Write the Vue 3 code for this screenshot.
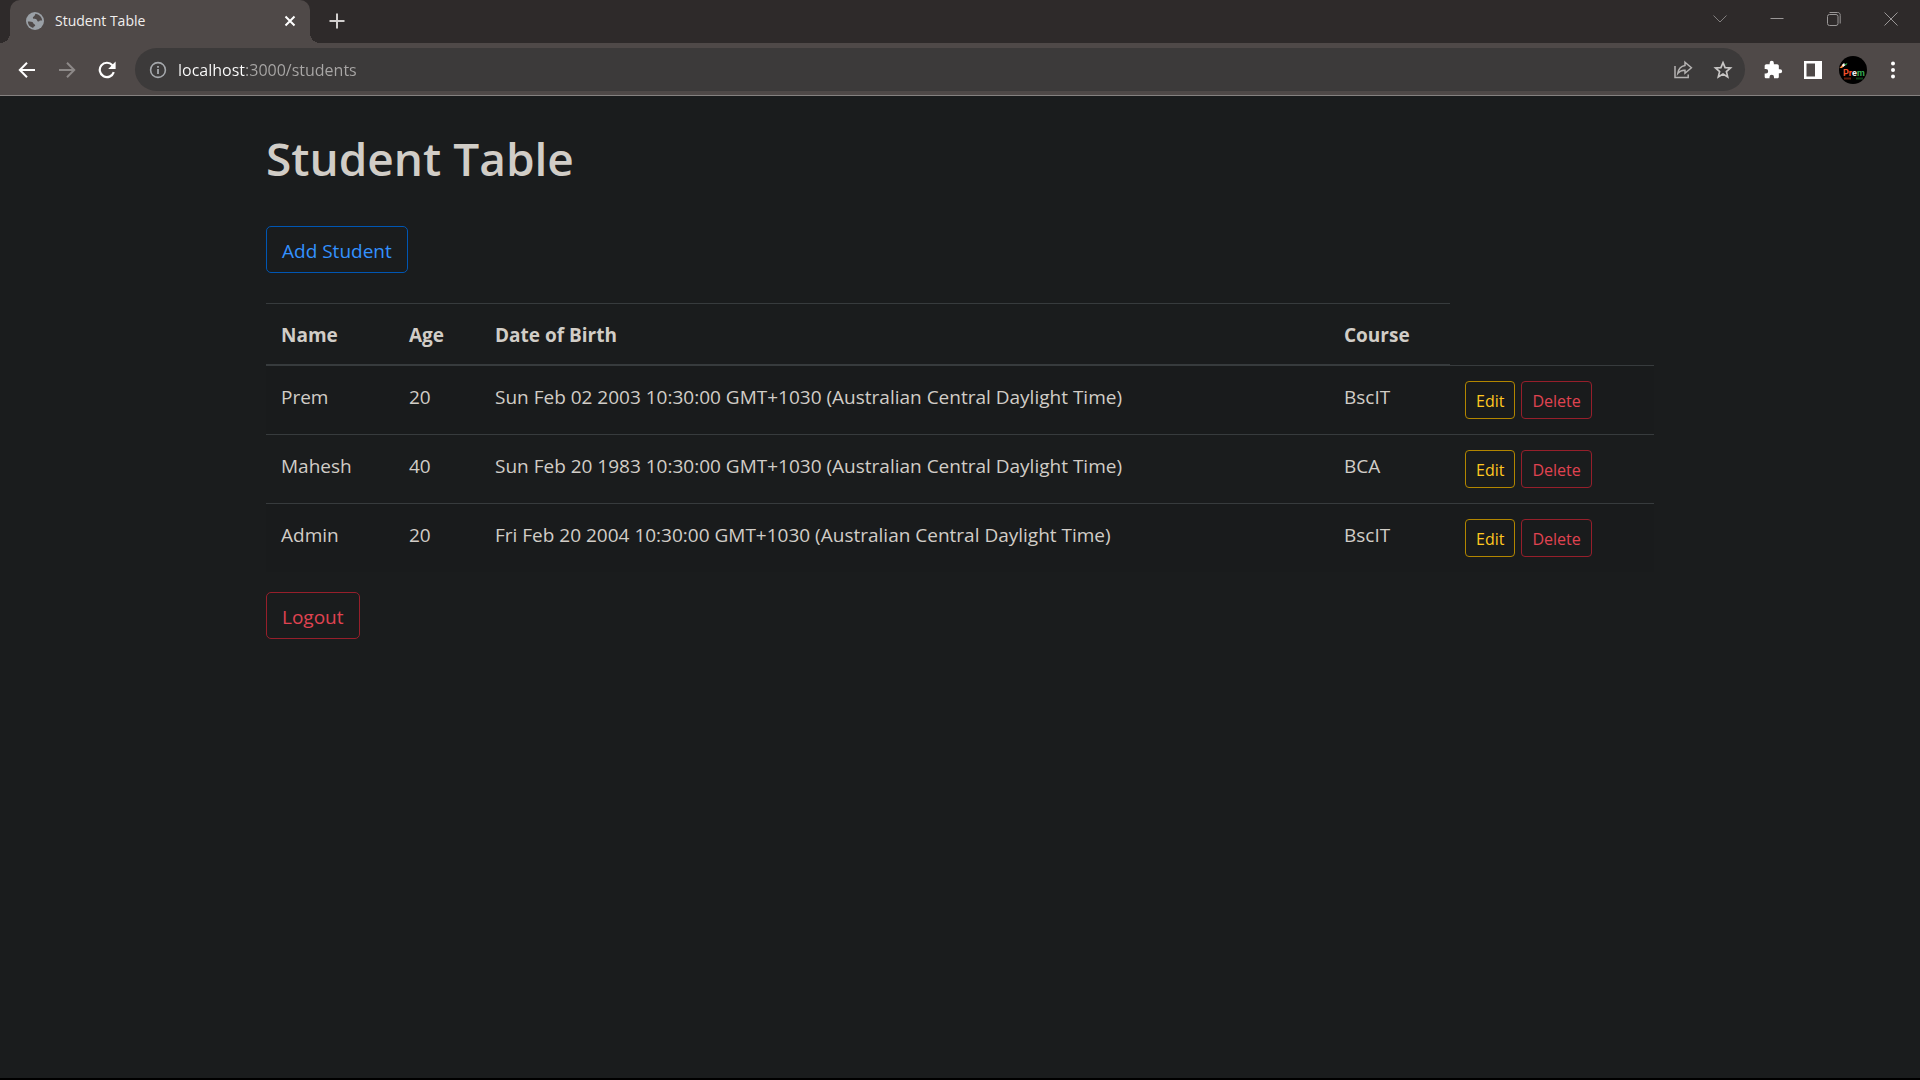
<script setup>
const students = [
  { name: 'Prem', age: 20, dob: 'Sun Feb 02 2003 10:30:00 GMT+1030 (Australian Central Daylight Time)', course: 'BscIT' },
  { name: 'Mahesh', age: 40, dob: 'Sun Feb 20 1983 10:30:00 GMT+1030 (Australian Central Daylight Time)', course: 'BCA' },
  { name: 'Admin', age: 20, dob: 'Fri Feb 20 2004 10:30:00 GMT+1030 (Australian Central Daylight Time)', course: 'BscIT' }
]
</script>

<template>
  <div class="window">
    <header class="tabstrip">
      <div class="tab">
        <svg class="favicon" width="18" height="18" viewBox="0 0 18 18" aria-hidden="true">
          <circle cx="9" cy="9" r="9" fill="#9aa0a6" />
          <path d="M9.6 1.8 C8.6 3 9.2 3.6 7.8 4.4 C6.4 5 6.8 6.4 7.6 6.8 C9 7.4 10.8 6.6 11.2 8.4 C11.4 10 13.4 9.6 13.8 8.6 L16.2 8.4 A7.2 7.2 0 0 0 9.6 1.8 Z M1.8 9.6 C4 9.8 6.6 9.4 7.2 11 C7.4 12.4 9.4 11.8 9.2 13.6 C8.8 14.8 7.2 14.4 7.2 16 A7.2 7.2 0 0 1 1.8 9.6 Z" fill="#4f4948" />
        </svg>
        <span class="tab-title">Student Table</span>
        <button class="icon tab-close" aria-label="Close tab">
          <svg width="12" height="12" viewBox="0 0 12 12"><path d="M1.5 1.5 L10.5 10.5 M10.5 1.5 L1.5 10.5" stroke="#fff" stroke-width="2" /></svg>
        </button>
      </div>
      <button class="icon new-tab" aria-label="New tab">
        <svg width="16" height="16" viewBox="0 0 16 16"><path d="M8 0.5 V15.5 M0.5 8 H15.5" stroke="#d2cfce" stroke-width="2" /></svg>
      </button>
      <div class="caption">
        <button class="icon" aria-label="Search tabs">
          <svg width="14" height="14" viewBox="0 0 14 14"><path d="M0.5 3.5 L7 10 L13.5 3.5" fill="none" stroke="#817e7e" /></svg>
        </button>
        <button class="icon" aria-label="Minimize">
          <svg width="14" height="14" viewBox="0 0 14 14"><path d="M0.5 6.5 H13.5" stroke="#9a9797" /></svg>
        </button>
        <button class="icon" aria-label="Restore">
          <svg width="14" height="14" viewBox="0 0 14 14"><rect x="0.5" y="2.5" width="10.5" height="11" rx="2" fill="none" stroke="#9a9797" /><path d="M2.5 0.5 H10.5 A2.5 2.5 0 0 1 13.2 3.5 V11.5" fill="none" stroke="#9a9797" /></svg>
        </button>
        <button class="icon" aria-label="Close">
          <svg width="14" height="14" viewBox="0 0 14 14"><path d="M0.5 0.5 L13.5 13.5 M13.5 0.5 L0.5 13.5" stroke="#9a9797" /></svg>
        </button>
      </div>
    </header>

    <nav class="toolbar" aria-label="Browser toolbar">
      <div class="history">
        <button class="icon" aria-label="Back">
          <svg width="18" height="18" viewBox="0 0 18 18"><path d="M17 9 H2 M9 1.8 L1.8 9 L9 16.2" fill="none" stroke="#fff" stroke-width="2" /></svg>
        </button>
        <button class="icon" aria-label="Forward">
          <svg width="18" height="18" viewBox="0 0 18 18"><path d="M1 9 H16 M9 1.8 L16.2 9 L9 16.2" fill="none" stroke="#8d8988" stroke-width="2" /></svg>
        </button>
        <button class="icon" aria-label="Reload">
          <svg width="18" height="18" viewBox="0 0 18 18"><path d="M15.8 11.2 A7.2 7.2 0 1 1 14.4 4.2" fill="none" stroke="#fff" stroke-width="2.2" /><path d="M17.6 0.6 V8 H10.2 Z" fill="#fff" /></svg>
        </button>
      </div>
      <div class="omnibox">
        <svg width="18" height="18" viewBox="0 0 18 18" aria-hidden="true"><circle cx="9" cy="9" r="7.4" fill="none" stroke="#a5a8ac" stroke-width="1.6" /><path d="M9 8 V13 M9 5 V6.8" stroke="#a5a8ac" stroke-width="1.8" /></svg>
        <input class="address" type="text" value="localhost:3000/students" aria-label="Address" />
        <button class="icon" aria-label="Share this page">
          <svg width="20" height="20" viewBox="0 0 20 20"><path d="M2 6 V17.6 H15.2 V14.4" fill="none" stroke="#b5b3b2" stroke-width="1.5" /><path d="M12 2.2 L18.4 7.8 L12 13.2 V10.2 C9 10 6.6 11 4.8 13.4 C5.4 9 7.8 6 12 5.4 Z" fill="none" stroke="#b5b3b2" stroke-width="1.5" /></svg>
        </button>
        <button class="icon" aria-label="Bookmark this page">
          <svg width="20" height="20" viewBox="0 0 20 20"><path d="M10 2.6 L12.1 7.6 L17.5 8 L13.4 11.6 L14.7 16.9 L10 14.1 L5.3 16.9 L6.6 11.6 L2.5 8 L7.9 7.6 Z" fill="none" stroke="#c8c6c5" stroke-width="1.7" /></svg>
        </button>
      </div>
      <div class="tools">
        <button class="icon" aria-label="Extensions">
          <svg width="20" height="20" viewBox="0 0 24 24"><path d="M20.5 11H19V7c0-1.1-.9-2-2-2h-4V3.500a2.500 2.500 0 0 0-5 0V5H4c-1.100 0-2 .9-2 2v3.800h1.500a2.700 2.700 0 0 1 0 5.400H2V20c0 1.100.9 2 2 2h3.800v-1.500a2.700 2.700 0 0 1 5.400 0V22H17c1.100 0 2-.9 2-2v-4h1.500a2.500 2.500 0 0 0 0-5z" fill="#fff" /></svg>
        </button>
        <button class="icon" aria-label="Side panel">
          <svg width="20" height="20" viewBox="0 0 20 20"><path d="M1 1 H19 V19 H1 Z M3.500 3.500 V16.500 H12 V3.500 Z" fill="#fff" fill-rule="evenodd" /></svg>
        </button>
        <button class="icon avatar" aria-label="Profile">
          <svg width="28" height="28" viewBox="0 0 28 28">
            <circle cx="14" cy="14" r="14" fill="#000" />
            <path d="M0.500 12 L4 8 L6 9 L3 12 Z" fill="#ff8a3c" /><path d="M3 9 L5 7 L6.500 9 L4 11 Z" fill="#fff" /><path d="M5 8.500 L8.500 7 L7 9.500 Z" fill="#2fa84a" />
            <text x="4" y="20" font-family="Roboto, sans-serif" font-size="9" font-weight="700"><tspan fill="#f4502a">Pr</tspan><tspan fill="#eee">e</tspan><tspan fill="#35a853">m</tspan></text>
            <path d="M5 22.500 H12" stroke="#5c1d0d" stroke-width="2" /><path d="M17 22.500 H24" stroke="#0d3d18" stroke-width="2" />
          </svg>
        </button>
        <button class="icon" aria-label="Menu">
          <svg width="20" height="20" viewBox="0 0 20 20" fill="#fff"><circle cx="10" cy="3.500" r="2" /><circle cx="10" cy="10" r="2" /><circle cx="10" cy="16.500" r="2" /></svg>
        </button>
      </div>
    </nav>

    <main class="page">
      <div class="container">
        <h1>Student Table</h1>
        <button class="btn primary">Add Student</button>
        <table>
          <colgroup>
            <col class="col-name" />
            <col class="col-age" />
            <col />
            <col class="col-course" />
            <col class="col-actions" />
          </colgroup>
          <thead>
            <tr>
              <th scope="col">Name</th>
              <th scope="col">Age</th>
              <th scope="col">Date of Birth</th>
              <th scope="col">Course</th>
            </tr>
          </thead>
          <tbody>
            <tr v-for="s in students" :key="s.name">
              <td>{{ s.name }}</td>
              <td>{{ s.age }}</td>
              <td>{{ s.dob }}</td>
              <td>{{ s.course }}</td>
              <td class="cell-actions">
                <div class="actions">
                  <button class="btn small warning">Edit</button>
                  <button class="btn small danger">Delete</button>
                </div>
              </td>
            </tr>
          </tbody>
        </table>
        <button class="btn danger">Logout</button>
      </div>
    </main>
  </div>
</template>

<style>
body {
  margin: 0;
  background: #1a1c1d;
}
</style>

<style scoped>
* {
  box-sizing: border-box;
}

.window {
  display: flex;
  flex-direction: column;
  min-height: 100vh;
  border-bottom: 2px solid #000;
  color: #d1cdc7;
  font-family: "Open Sans", "Noto Sans", sans-serif;
}

svg {
  display: block;
}

.icon {
  display: flex;
  align-items: center;
  justify-content: center;
  padding: 0;
  border: 0;
  background: none;
}

.tabstrip {
  display: flex;
  align-items: flex-start;
  height: 43px;
  padding-left: 10px;
  background: #2e2a2a;
}

.tab {
  position: relative;
  display: flex;
  align-items: center;
  width: 300px;
  height: 43px;
  padding: 0 14px 2px 16px;
  border-radius: 10px 10px 0 0;
  background: #4f4948;
}

.tab::before,
.tab::after {
  content: "";
  position: absolute;
  bottom: 0;
  width: 10px;
  height: 10px;
}

.tab::before {
  right: 100%;
  background: radial-gradient(circle at 0 0, transparent 10px, #4f4948 10px);
}

.tab::after {
  left: 100%;
  background: radial-gradient(circle at 100% 0, transparent 10px, #4f4948 10px);
}

.tab-title {
  flex: 1;
  padding-left: 11px;
  color: #f1efee;
  font-size: 14px;
  line-height: 20px;
}

.new-tab {
  width: 34px;
  height: 42px;
  margin-left: 10px;
}

.caption {
  display: flex;
  gap: 43px;
  height: 37px;
  margin-left: auto;
  padding-right: 22px;
}

.toolbar {
  display: flex;
  align-items: center;
  height: 53px;
  padding: 1px 17px 0 18px;
  border-bottom: 1px solid #858180;
  background: #4f4948;
}

.history {
  display: flex;
  gap: 22px;
}

.omnibox {
  display: flex;
  flex: 1;
  align-items: center;
  gap: 20px;
  height: 43px;
  margin-left: 19px;
  padding: 0 12px 0 14px;
  border-radius: 22px;
  background: #3c3a3a;
}

.address {
  flex: 1;
  min-width: 0;
  margin-left: -9px;
  padding: 0;
  border: 0;
  outline: 0;
  background: linear-gradient(90deg, #fff 67px, #a9a7a6 67px);
  background-clip: text;
  color: transparent;
  font: 16px/24px "Open Sans", "Noto Sans", sans-serif;
}

.tools {
  display: flex;
  align-items: center;
  gap: 16px;
  margin-left: 18px;
}

.tools .icon:nth-child(2) {
  margin-left: 4px;
}

.page {
  flex: 1;
  padding: 32px 24px;
}

.container {
  max-width: 1388px;
  margin: 0 auto;
}

h1 {
  margin: 0 0 38px;
  font-size: 46px;
  font-weight: 600;
  line-height: 60px;
}

.btn {
  display: block;
  padding: 9px 15px 6px;
  border: 1px solid;
  border-radius: 5px;
  background: transparent;
  font: 19px/30px "Open Sans", "Noto Sans", sans-serif;
}

.small {
  padding: 6px 10px 4px;
  border-radius: 4px;
  font-size: 16px;
  line-height: 26px;
}

.primary {
  border-color: #0056b3;
  color: #3391ff;
}

.warning {
  border-color: #b28600;
  color: #ffc721;
}

.danger {
  border-color: #961f2b;
  color: #e04351;
}

table {
  width: 100%;
  margin: 30px 0 20px;
  border-collapse: collapse;
  table-layout: fixed;
  font-size: 19px;
  line-height: 30px;
}

.col-name {
  width: 128px;
}

.col-age {
  width: 86px;
}

.col-course {
  width: 121px;
}

.col-actions {
  width: 204px;
}

th,
td {
  padding: 16px 15px 14px;
  border-top: 1px solid #373b3d;
  text-align: left;
  vertical-align: top;
}

th {
  border-bottom: 2px solid #373b3d;
  font-weight: 700;
}

.cell-actions {
  padding: 15px;
}

tbody tr:nth-child(odd) {
  background: rgba(0, 0, 0, 0.03);
}

.actions {
  display: flex;
  gap: 6px;
}
</style>
